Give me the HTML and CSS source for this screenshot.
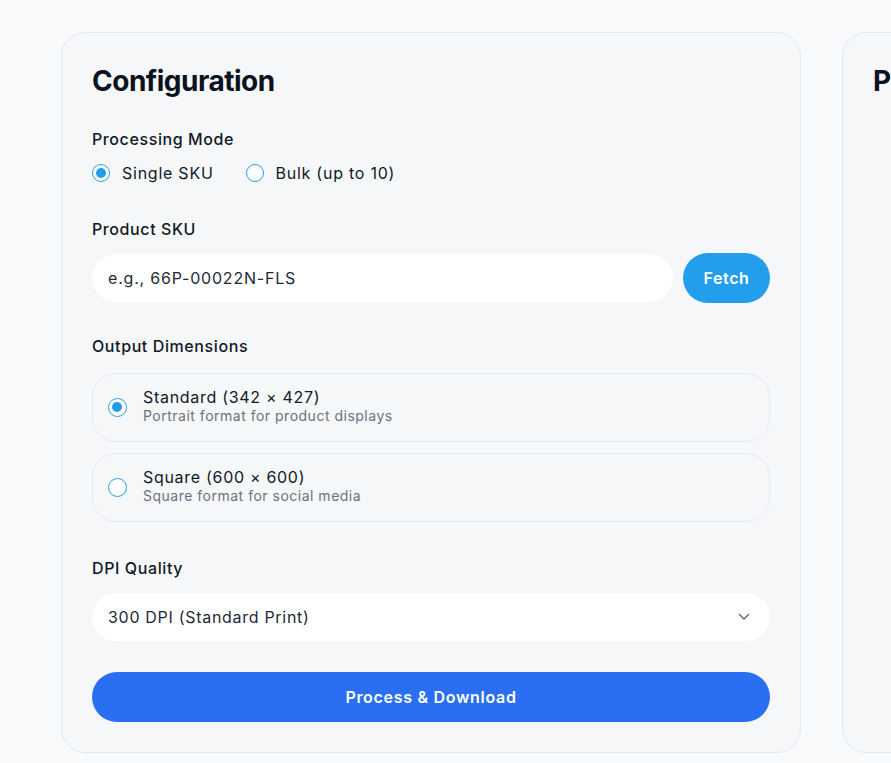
FILE: index.html
```html
<!DOCTYPE html>
<html>
<head>
<meta charset="utf-8">
<link rel="stylesheet" href="styles.css">
</head>
<body>
<div class="layout">
  <section class="card">
    <h1 class="card-title">Configuration</h1>

    <div class="field">
      <div class="label">Processing Mode</div>
      <div class="radio-row">
        <label class="radio-item"><span class="radio checked"></span><span>Single SKU</span></label>
        <label class="radio-item"><span class="radio"></span><span>Bulk (up to 10)</span></label>
      </div>
    </div>

    <div class="field">
      <div class="label">Product SKU</div>
      <div class="sku-row">
        <div class="input">e.g., 66P-00022N-FLS</div>
        <button class="fetch">Fetch</button>
      </div>
    </div>

    <div class="field field-dims">
      <div class="label">Output Dimensions</div>
      <div class="options">
        <div class="option">
          <span class="radio checked"></span>
          <div class="option-text">
            <div class="option-title">Standard (342 × 427)</div>
            <div class="option-desc">Portrait format for product displays</div>
          </div>
        </div>
        <div class="option">
          <span class="radio"></span>
          <div class="option-text">
            <div class="option-title">Square (600 × 600)</div>
            <div class="option-desc">Square format for social media</div>
          </div>
        </div>
      </div>
    </div>

    <div class="field field-dpi">
      <div class="label">DPI Quality</div>
      <div class="select">
        <span>300 DPI (Standard Print)</span>
        <svg class="chev" width="12" height="8" viewBox="0 0 12 8"><path d="M1.5 1.5 L6 6 L10.5 1.5" fill="none" stroke="#6b7280" stroke-width="1.6" stroke-linecap="round" stroke-linejoin="round"/></svg>
      </div>
    </div>

    <button class="primary">Process &amp; Download</button>
  </section>

  <section class="card">
    <h1 class="card-title">Preview</h1>
  </section>
</div>
</body>
</html>
```

FILE: styles.css
```css
* { box-sizing: border-box; }
html, body { margin: 0; padding: 0; }
body {
  background: #f8fafc;
  font-family: Inter, "Noto Sans", sans-serif;
  color: #111827;
  overflow: hidden;
  height: 763px;
  width: 891px;
}
.layout {
  display: flex;
  gap: 41px;
  padding: 32px 0 0 61px;
  overflow: hidden;
  width: 891px;
}
.card {
  flex: 0 0 740px;
  width: 740px;
  background: #f6f7f8;
  border: 1px solid #e2e8f0;
  border-radius: 24px;
  padding: 30px 30px 29px 30px;
  display: flex;
  flex-direction: column;
  height: 721px;
}
.card-title {
  margin: 0;
  font-size: 28px;
  line-height: 36px;
  font-weight: 700;
  letter-spacing: -0.5px;
  color: #0b1220;
}
.field { display: flex; flex-direction: column; }
.field + .field { margin-top: 32px; }
.field + .field-dims { margin-top: 31px; }
.field + .field-dpi { margin-top: 34px; }
.card-title + .field { margin-top: 28px; }
.label {
  font-size: 16px;
  line-height: 24px;
  font-weight: 500;
  letter-spacing: 0.6px;
  color: #111827;
}
.radio-row {
  display: flex;
  gap: 32px;
  margin-top: 10px;
  height: 24px;
  align-items: center;
}
.radio-item {
  display: flex;
  align-items: center;
  gap: 12px;
  font-size: 16px;
  line-height: 24px;
  letter-spacing: 0.75px;
  color: #111827;
}
.radio {
  width: 18px;
  height: 18px;
  border: 1.5px solid #2e9ee8;
  border-radius: 50%;
  background: #fff;
  flex: 0 0 auto;
  position: relative;
}
.radio.checked::after {
  content: "";
  position: absolute;
  left: 2.5px;
  top: 2.5px;
  width: 10px;
  height: 10px;
  border-radius: 50%;
  background: #229ee9;
}
.sku-row {
  display: flex;
  gap: 10px;
  margin-top: 12px;
  align-items: center;
}
.input {
  flex: 1;
  height: 48px;
  background: #fff;
  border-radius: 24px;
  padding: 0 16px;
  display: flex;
  align-items: center;
  font-size: 16px;
  letter-spacing: 0.8px;
  color: #1f2937;
}
.fetch {
  width: 87px;
  height: 50px;
  border: none;
  border-radius: 25px;
  background: #229eed;
  color: #fff;
  font-family: inherit;
  font-size: 16px;
  font-weight: 600;
  letter-spacing: 0.6px;
}
.options {
  display: flex;
  flex-direction: column;
  gap: 11px;
  margin-top: 15px;
}
.option {
  height: 69px;
  border: 1px solid #e2e8f0;
  border-radius: 24px;
  display: flex;
  align-items: center;
  padding: 0 15px 0 15px;
  gap: 16px;
}
.option .radio { width: 19px; height: 19px; }
.option .radio.checked::after { left: 3px; top: 3px; }
.option-text { display: flex; flex-direction: column; padding-bottom: 4px; }
.option-title {
  font-size: 16px;
  line-height: 20px;
  letter-spacing: 0.7px;
  color: #111827;
}
.option-desc {
  font-size: 14px;
  line-height: 18px;
  letter-spacing: 0.5px;
  color: #6b7280;
}
.select {
  margin-top: 13px;
  height: 48px;
  background: #fff;
  border-radius: 24px;
  padding: 0 20px 0 16px;
  display: flex;
  align-items: center;
  justify-content: space-between;
  font-size: 16px;
  letter-spacing: 0.7px;
  color: #1f2937;
}
.primary {
  margin-top: 31px;
  height: 50px;
  border: none;
  border-radius: 25px;
  background: #2a6ff2;
  color: #fff;
  font-family: inherit;
  font-size: 16px;
  font-weight: 600;
  letter-spacing: 0.7px;
  width: 100%;
}
```
